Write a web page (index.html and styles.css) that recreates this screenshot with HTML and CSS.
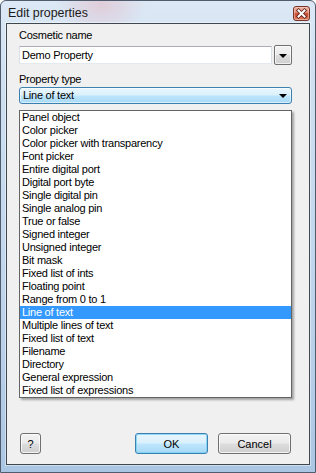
FILE: index.html
```html
<!DOCTYPE html>
<html>
<head>
<meta charset="utf-8">
<link rel="stylesheet" href="styles.css">
</head>
<body>
<div class="window">
  <div class="titlebar">
    <span class="title">Edit properties</span>
    <span class="close">
      <svg width="15" height="13" viewBox="0 0 15 13">
        <path d="M4.5 3.5 L10.5 9.5 M10.5 3.5 L4.5 9.5" stroke="#5a2018" stroke-width="3.6" stroke-linecap="square" fill="none"/>
        <path d="M4.5 3.5 L10.5 9.5 M10.5 3.5 L4.5 9.5" stroke="#ffffff" stroke-width="2" stroke-linecap="square" fill="none"/>
      </svg>
    </span>
  </div>
  <div class="client">
    <div class="label">Cosmetic name</div>
    <div class="field-row">
      <div class="textbox">Demo Property</div>
      <div class="dropbtn"><span class="arrow"></span></div>
    </div>
    <div class="label label2">Property type</div>
    <div class="combo"><span class="combo-text">Line of text</span><span class="arrow"></span></div>
    <div class="spacer"></div>
    <div class="buttons">
      <div class="btn help">?</div>
      <div class="grow"></div>
      <div class="btn ok">OK</div>
      <div class="btn cancel">Cancel</div>
    </div>
    <ul class="list">
      <li>Panel object</li>
      <li>Color picker</li>
      <li>Color picker with transparency</li>
      <li>Font picker</li>
      <li>Entire digital port</li>
      <li>Digital port byte</li>
      <li>Single digital pin</li>
      <li>Single analog pin</li>
      <li>True or false</li>
      <li>Signed integer</li>
      <li>Unsigned integer</li>
      <li>Bit mask</li>
      <li>Fixed list of ints</li>
      <li>Floating point</li>
      <li>Range from 0 to 1</li>
      <li class="sel">Line of text</li>
      <li>Multiple lines of text</li>
      <li>Fixed list of text</li>
      <li>Filename</li>
      <li>Directory</li>
      <li>General expression</li>
      <li>Fixed list of expressions</li>
    </ul>
  </div>
</div>
</body>
</html>
```
FILE: styles.css
```css
* { box-sizing: border-box; }
html, body { margin: 0; padding: 0; }
body {
  width: 316px;
  height: 473px;
  overflow: hidden;
  background: #ffffff;
  font-family: "Liberation Sans", Arial, sans-serif;
}
.window {
  width: 316px;
  height: 473px;
  border: 1px solid #4e5c6d;
  border-radius: 6px 6px 0 0;
  padding: 0 5px 7px 5px;
  display: flex;
  flex-direction: column;
  background:
    radial-gradient(ellipse 45px 34px at 100px 2px, rgba(228, 186, 198, 0.6), rgba(228, 186, 198, 0) 100%),
    linear-gradient(180deg, #dce8f5 0%, #cddef0 20%, #c0d5ec 60%, #abc6e3 100%);
}
.titlebar {
  height: 22px;
  margin: 0 -5px;
  padding: 0 5px 0 7px;
  display: flex;
  align-items: flex-start;
}
.title {
  font-size: 12.4px;
  line-height: 14px;
  margin-top: 5px;
  color: #1a1a1a;
  flex: 1;
}
.close {
  margin-top: 5px;
  width: 17px;
  height: 15px;
  border: 1px solid #7a3427;
  border-radius: 3px;
  background: linear-gradient(180deg, #eeb2a2 0%, #e08a72 45%, #cc4f36 50%, #cd5a40 75%, #e48c6e 100%);
  box-shadow: inset 0 0 0 1px rgba(255, 220, 210, 0.45);
  display: flex;
  align-items: center;
  justify-content: center;
}
.close svg { display: block; }
.client {
  flex: 1;
  position: relative;
  background: #f0f0f0;
  border: 1px solid #3f4750;
  box-shadow: 0 0 0 1px rgba(255, 255, 255, 0.45);
  padding: 5px 17px 10px 12px;
  display: flex;
  flex-direction: column;
  font-size: 11px;
  letter-spacing: -0.25px;
  color: #000000;
}
.label {
  height: 13px;
  line-height: 13px;
}
.label2 { margin-top: 8px; }
.field-row {
  margin-top: 3px;
  height: 20px;
  display: flex;
  align-items: center;
  gap: 2px;
}
.textbox {
  flex: 1;
  height: 18px;
  background: #ffffff;
  border: 1px solid #abadb3;
  border-left-color: #dbdfe6;
  border-right-color: #dbdfe6;
  border-bottom-color: #e3e9ef;
  padding-left: 2px;
  line-height: 16px;
}
.dropbtn {
  width: 18px;
  height: 20px;
  border: 1px solid #707070;
  border-radius: 2px;
  background: linear-gradient(180deg, #f2f2f2 0%, #ebebeb 50%, #dddddd 51%, #cfcfcf 100%);
  box-shadow: inset 0 0 0 1px rgba(255, 255, 255, 0.7);
  display: flex;
  align-items: center;
  justify-content: center;
}
.arrow {
  width: 0;
  height: 0;
  border-left: 4px solid transparent;
  border-right: 4px solid transparent;
  border-top: 4px solid #000000;
}
.dropbtn .arrow { margin-top: 1px; }
.combo {
  margin-top: 1px;
  height: 17px;
  border: 1px solid #3c7fb1;
  border-radius: 3px;
  background: linear-gradient(180deg, #eaf6fd 0%, #d9f0fc 48%, #bee6fd 52%, #a7d9f5 100%);
  box-shadow: inset 0 0 0 1px rgba(255, 255, 255, 0.55);
  display: flex;
  align-items: center;
  padding: 0 4px 0 3px;
}
.combo-text { flex: 1; line-height: 15px; }
.combo .arrow { margin-top: 1px; }
.spacer { flex: 1; }
.buttons {
  height: 21px;
  display: flex;
  align-items: stretch;
  gap: 10px;
  padding: 0 1px;
}
.grow { flex: 1; }
.btn {
  width: 73px;
  height: 21px;
  border: 1px solid #707070;
  border-radius: 3px;
  background: linear-gradient(180deg, #f2f2f2 0%, #ebebeb 48%, #dddddd 52%, #cfcfcf 100%);
  box-shadow: inset 0 0 0 1px rgba(255, 255, 255, 0.75);
  display: flex;
  align-items: center;
  justify-content: center;
  letter-spacing: 0;
  font-size: 11px;
}
.btn.help { width: 21px; }
.btn.ok {
  border-color: #3c7fb1;
  background: linear-gradient(180deg, #eaf6fd 0%, #d9f0fc 48%, #bee6fd 52%, #a7d9f5 100%);
  box-shadow: inset 0 0 0 1px rgba(120, 210, 245, 0.8);
}
.list {
  position: absolute;
  left: 12px;
  top: 86px;
  width: 273px;
  margin: 0;
  padding: 0;
  list-style: none;
  background: #ffffff;
  border: 1px solid #646464;
  box-shadow: 2px 2px 2px rgba(0, 0, 0, 0.32);
}
.list li {
  height: 13px;
  line-height: 13px;
  padding-left: 2px;
  white-space: nowrap;
}
.list li.sel {
  background: #3399ff;
  color: #ffffff;
}
```
